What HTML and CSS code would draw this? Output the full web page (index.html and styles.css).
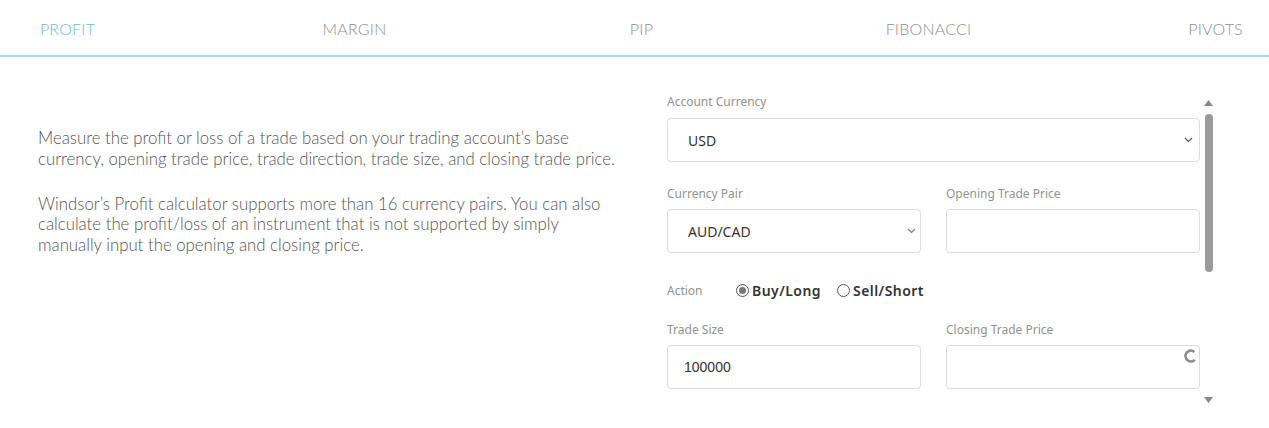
FILE: index.html
```html
<!DOCTYPE html>
<html>
<head>
<meta charset="utf-8">
<link rel="stylesheet" href="styles.css">
</head>
<body>
<nav class="tabs">
  <div class="tab active">PROFIT</div>
  <div class="tab">MARGIN</div>
  <div class="tab">PIP</div>
  <div class="tab">FIBONACCI</div>
  <div class="tab">PIVOTS</div>
</nav>
<main class="main">
  <section class="intro">
    <p>Measure the profit or loss of a trade based on your trading account’s base currency, opening trade price, trade direction, trade size, and closing trade price.</p>
    <p>Windsor’s Profit calculator supports more than 16 currency pairs. You can also calculate the profit/loss of an instrument that is not supported by simply manually input the opening and closing price.</p>
  </section>
  <section class="panel">
    <div class="form">
      <div class="field">
        <div class="label">Account Currency</div>
        <div class="box select"><span>USD</span>
          <svg class="chev" width="9" height="6" viewBox="0 0 9 6"><path d="M1 1l3.5 3.5L8 1" fill="none" stroke="#555" stroke-width="1.1"/></svg>
        </div>
      </div>
      <div class="row">
        <div class="field">
          <div class="label">Currency Pair</div>
          <div class="box select"><span>AUD/CAD</span>
            <svg class="chev" width="9" height="6" viewBox="0 0 9 6"><path d="M1 1l3.5 3.5L8 1" fill="none" stroke="#777" stroke-width="1.1"/></svg>
          </div>
        </div>
        <div class="field">
          <div class="label">Opening Trade Price</div>
          <div class="box"></div>
        </div>
      </div>
      <div class="action">
        <span class="alabel">Action</span>
        <span class="radio checked"></span><span class="rtext">Buy/Long</span>
        <span class="radio"></span><span class="rtext">Sell/Short</span>
      </div>
      <div class="row row-last">
        <div class="field">
          <div class="label">Trade Size</div>
          <div class="box num">100000</div>
        </div>
        <div class="field">
          <div class="label">Closing Trade Price</div>
          <div class="box spinbox">
            <svg class="spin" width="14" height="14" viewBox="0 0 14 14"><path d="M11.4 2.9A5.4 5.4 0 1 0 11.8 10.8" fill="none" stroke="#8a8a8a" stroke-width="2.6"/></svg>
          </div>
        </div>
      </div>
    </div>
    <div class="scrollbar">
      <svg width="9" height="6" viewBox="0 0 9 6"><path d="M4.5 0L9 6H0z" fill="#888"/></svg>
      <div class="thumb"></div>
      <svg class="down" width="9" height="6" viewBox="0 0 9 6"><path d="M0 0h9L4.5 6z" fill="#888"/></svg>
    </div>
  </section>
</main>
</body>
</html>
```
FILE: styles.css
```css
* { box-sizing: border-box; }
body { margin: 0; background: #fff; font-family: "Noto Sans", sans-serif; }
.tabs {
  display: flex;
  height: 57px;
  border-bottom: 2px solid #a9dcea;
  overflow: hidden;
}
.tab {
  flex: 0 0 287px;
  text-align: center;
  font-family: "Lato Light", "Lato", sans-serif;
  font-weight: 300;
  font-size: 16px;
  color: #8f8f8f;
  padding-top: 19px;
  letter-spacing: 0.2px;
}
.tab:first-child { margin-left: -76px; }
.tab.active {
  color: #66c2c8;
  position: relative;
}
.tab.active::after {
  content: "";
  position: absolute;
  left: 0; right: 0; bottom: -2px;
  height: 2px;
  background: #35b4d4;
}
.main { display: flex; padding-top: 37px; }
.intro {
  flex: 0 0 667px;
  padding-left: 38px;
  padding-right: 45px;
  padding-top: 34px;
  font-family: "Lato Light", "Lato", sans-serif;
  font-weight: 300;
  font-size: 16.8px;
  line-height: 20.5px;
  color: #555;
}
.intro p { margin: 0 0 24.5px; }
.panel { display: flex; }
.form { width: 533px; }
.row { display: flex; gap: 25px; margin-top: 24px; }
.row-last { margin-top: 19px; }
.row .field { flex: 0 0 254px; }
.label {
  font-size: 12px;
  line-height: 16px;
  color: #929292;
  margin-bottom: 8px;
}
.row .label { margin-bottom: 7px; }
.box {
  height: 44px;
  border: 1px solid #dcdcdc;
  border-radius: 4px;
  display: flex;
  align-items: center;
  padding: 0 20px;
  font-size: 14px;
  color: #333;
  position: relative;
}
.select { justify-content: space-between; padding-right: 6px; }
.row .select { padding-right: 4px; }
.num { font-family: "Liberation Sans", sans-serif; padding-left: 16px; }
.spin { position: absolute; right: 2px; top: 3px; }
.action {
  display: flex;
  align-items: center;
  height: 26px;
  margin-top: 24px;
}
.alabel { font-size: 12px; color: #929292; width: 69px; }
.radio {
  width: 13px; height: 13px;
  border: 1px solid #555;
  border-radius: 50%;
  display: inline-flex;
  align-items: center;
  justify-content: center;
  margin-right: 3px;
}
.radio.checked::after {
  content: "";
  width: 7px; height: 7px;
  border-radius: 50%;
  background: #777;
}
.rtext {
  font-size: 14px;
  font-weight: 600;
  color: #333;
  margin-right: 16px;
  letter-spacing: 0.45px;
}
.scrollbar {
  width: 11px;
  margin-left: 3px;
  display: flex;
  flex-direction: column;
  align-items: center;
  padding-top: 6px;
}
.thumb {
  width: 8px;
  height: 158px;
  margin-top: 8px;
  background: #9a9a9a;
  border-radius: 4px;
}
.down { margin-top: 125px; }
```
